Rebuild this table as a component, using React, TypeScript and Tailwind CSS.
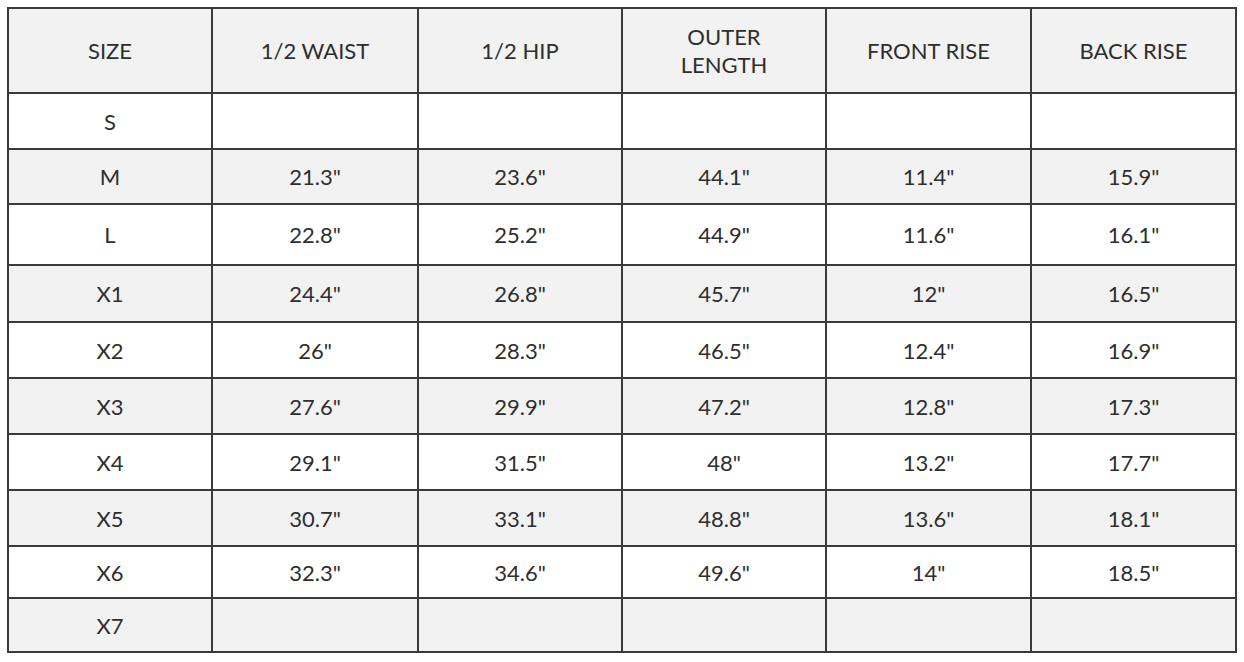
const headers = ["SIZE", "1/2 WAIST", "1/2 HIP", "OUTER LENGTH", "FRONT RISE", "BACK RISE"];

const rows: { h: string; cells: string[] }[] = [
  { h: "h-[56px]", cells: ["S", "", "", "", "", ""] },
  { h: "h-[55px]", cells: ["M", '21.3"', '23.6"', '44.1"', '11.4"', '15.9"'] },
  { h: "h-[61px]", cells: ["L", '22.8"', '25.2"', '44.9"', '11.6"', '16.1"'] },
  { h: "h-[57px]", cells: ["X1", '24.4"', '26.8"', '45.7"', '12"', '16.5"'] },
  { h: "h-[56px]", cells: ["X2", '26"', '28.3"', '46.5"', '12.4"', '16.9"'] },
  { h: "h-[56px]", cells: ["X3", '27.6"', '29.9"', '47.2"', '12.8"', '17.3"'] },
  { h: "h-[56px]", cells: ["X4", '29.1"', '31.5"', '48"', '13.2"', '17.7"'] },
  { h: "h-[56px]", cells: ["X5", '30.7"', '33.1"', '48.8"', '13.6"', '18.1"'] },
  { h: "h-[52px]", cells: ["X6", '32.3"', '34.6"', '49.6"', '14"', '18.5"'] },
  { h: "h-[54px]", cells: ["X7", "", "", "", "", ""] },
];

export default function App() {
  return (
    <div className="w-[1244px] h-[662px] bg-white pt-[7px] pl-[7px] font-['Lato','Noto_Sans',sans-serif] text-[#2e2e2e]">
      <table className="w-[1230px] table-fixed border-collapse border-2 border-[#3a3a3a] text-[22px]">
        <colgroup>
          <col className="w-[204px]" />
          <col className="w-[206px]" />
          <col className="w-[204px]" />
          <col className="w-[204px]" />
          <col className="w-[205px]" />
          <col className="w-[205px]" />
        </colgroup>
        <thead>
          <tr className="h-[85px] bg-[#f2f2f2]">
            {headers.map((h) => (
              <th
                key={h}
                className={`border-2 border-[#3a3a3a] font-normal leading-[28px] ${
                  h === "OUTER LENGTH" ? "px-14" : "px-2"
                }`}
              >
                {h}
              </th>
            ))}
          </tr>
        </thead>
        <tbody>
          {rows.map((r, i) => (
            <tr key={r.cells[0]} className={`${r.h} ${i % 2 === 1 ? "bg-[#f2f2f2]" : "bg-white"}`}>
              {r.cells.map((c, j) => (
                <td key={j} className="border-2 border-[#3a3a3a] text-center">
                  {c}
                </td>
              ))}
            </tr>
          ))}
        </tbody>
      </table>
    </div>
  );
}
